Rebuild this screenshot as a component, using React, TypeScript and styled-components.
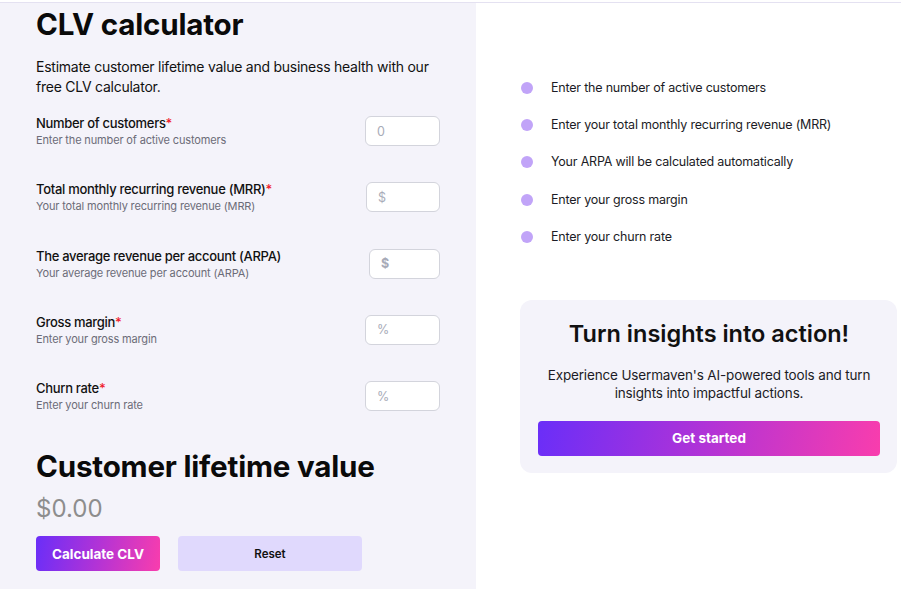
import styled, { createGlobalStyle } from "styled-components";

const GlobalStyle = createGlobalStyle`
  html, body {
    margin: 0;
    padding: 0;
    background: #ffffff;
  }
  body {
    font-family: Inter, "Noto Sans", sans-serif;
    color: #0a0a0a;
    -webkit-font-smoothing: antialiased;
  }
  * {
    box-sizing: border-box;
  }
`;

const brandGradient = "linear-gradient(100deg, #6a2ef8 0%, #b233d6 50%, #f93dad 100%)";

const Page = styled.div`
  margin-top: 2px;
  border-top: 1px solid #e4e1f1;
  display: grid;
  grid-template-columns: 476px 1fr;
  min-height: 586px;
`;

const CalculatorPanel = styled.section`
  background: #f4f3fa;
  padding: 3px 36px 20px 36px;
`;

const Title = styled.h1`
  margin: 0;
  font-size: 29.6px;
  line-height: 36px;
  font-weight: 700;
  letter-spacing: -0.2px;
`;

const Intro = styled.p`
  margin: 15px 0 17px;
  font-size: 14px;
  line-height: 20px;
  letter-spacing: -0.25px;
  color: #111;
`;

const FieldRow = styled.div`
  display: flex;
  align-items: center;
  justify-content: space-between;
  margin-bottom: 32.3px;
`;

const FieldText = styled.div`
  display: flex;
  flex-direction: column;
`;

const FieldLabel = styled.label`
  font-size: 13px;
  line-height: 18px;
  font-weight: 500;
  letter-spacing: -0.3px;
  color: #111;
`;

const Required = styled.span`
  color: #ef1c2c;
`;

const FieldHint = styled.span`
  font-size: 11px;
  line-height: 16px;
  letter-spacing: -0.15px;
  color: #6c6c78;
`;

const NumberInput = styled.input<{ $width: number; $strong?: boolean }>`
  width: ${(p) => p.$width}px;
  height: 30px;
  border: 1px solid #d3d4dc;
  border-radius: 6px;
  background: #fff;
  padding: 0 11px;
  font-family: Inter, "Noto Sans", sans-serif;
  font-size: 12.5px;
  color: #333;
  outline: none;

  &::placeholder {
    color: #a8abb8;
    font-weight: ${(p) => (p.$strong ? 700 : 400)};
  }
`;

const ResultHeading = styled.h2`
  margin: 0;
  padding-top: 3px;
  font-size: 29.6px;
  line-height: 36px;
  font-weight: 700;
  letter-spacing: -0.2px;
`;

const ResultValue = styled.div`
  margin-top: 10px;
  font-size: 24px;
  line-height: 30px;
  color: #8d8d8d;
`;

const ButtonRow = styled.div`
  display: flex;
  gap: 18px;
  margin-top: 12px;
`;

const PrimaryButton = styled.button<{ $width?: number }>`
  width: ${(p) => (p.$width ? `${p.$width}px` : "100%")};
  height: 35px;
  border: none;
  border-radius: 4px;
  background: ${brandGradient};
  color: #fff;
  font-family: Inter, "Noto Sans", sans-serif;
  font-size: 13.5px;
  font-weight: 700;
  cursor: pointer;
`;

const SecondaryButton = styled.button`
  width: 184px;
  height: 35px;
  border: none;
  border-radius: 4px;
  background: #e0d9fd;
  color: #111;
  font-family: Inter, "Noto Sans", sans-serif;
  font-size: 11.5px;
  font-weight: 600;
  cursor: pointer;
`;

const GuidePanel = styled.aside`
  padding: 76px 4px 0 44px;
`;

const StepList = styled.ul`
  list-style: none;
  margin: 0;
  padding: 0;
  display: flex;
  flex-direction: column;
  gap: 19.2px;
`;

const Step = styled.li`
  display: flex;
  align-items: center;
  gap: 18px;
  font-size: 12.5px;
  line-height: 18px;
  letter-spacing: -0.2px;
  color: #1c1c26;
`;

const Dot = styled.span`
  width: 12px;
  height: 12px;
  margin-left: 1px;
  border-radius: 50%;
  background: #c1a4f8;
  flex-shrink: 0;
`;

const PromoCard = styled.div`
  margin-top: 54px;
  background: #f4f3fa;
  border-radius: 12px;
  padding: 19px 17px 17px 18px;
  text-align: center;
`;

const PromoTitle = styled.h3`
  margin: 0;
  font-size: 23.5px;
  line-height: 30px;
  font-weight: 600;
  color: #111;
`;

const PromoText = styled.p`
  margin: 17px 0 19px;
  font-size: 13.5px;
  line-height: 18px;
  letter-spacing: -0.15px;
  color: #1c1c26;
`;

type Field = {
  label: string;
  hint: string;
  placeholder: string;
  required: boolean;
  width: number;
  strong?: boolean;
};

const fields: Field[] = [
  { label: "Number of customers", hint: "Enter the number of active customers", placeholder: "0", required: true, width: 75 },
  { label: "Total monthly recurring revenue (MRR)", hint: "Your total monthly recurring revenue (MRR)", placeholder: "$", required: true, width: 74 },
  { label: "The average revenue per account (ARPA)", hint: "Your average revenue per account (ARPA)", placeholder: "$", required: false, width: 71, strong: true },
  { label: "Gross margin", hint: "Enter your gross margin", placeholder: "%", required: true, width: 75 },
  { label: "Churn rate", hint: "Enter your churn rate", placeholder: "%", required: true, width: 75 },
];

const steps = [
  "Enter the number of active customers",
  "Enter your total monthly recurring revenue (MRR)",
  "Your ARPA will be calculated automatically",
  "Enter your gross margin",
  "Enter your churn rate",
];

export default function App() {
  return (
    <>
      <GlobalStyle />
      <Page>
        <CalculatorPanel>
          <Title>CLV calculator</Title>
          <Intro>
            Estimate customer lifetime value and business health with our free CLV calculator.
          </Intro>

          {fields.map((f) => (
            <FieldRow key={f.label}>
              <FieldText>
                <FieldLabel>
                  {f.label}
                  {f.required && <Required>*</Required>}
                </FieldLabel>
                <FieldHint>{f.hint}</FieldHint>
              </FieldText>
              <NumberInput
                $width={f.width}
                $strong={f.strong}
                placeholder={f.placeholder}
                readOnly={f.strong}
              />
            </FieldRow>
          ))}

          <ResultHeading>Customer lifetime value</ResultHeading>
          <ResultValue>$0.00</ResultValue>
          <ButtonRow>
            <PrimaryButton $width={124}>Calculate CLV</PrimaryButton>
            <SecondaryButton>Reset</SecondaryButton>
          </ButtonRow>
        </CalculatorPanel>

        <GuidePanel>
          <StepList>
            {steps.map((s) => (
              <Step key={s}>
                <Dot />
                {s}
              </Step>
            ))}
          </StepList>

          <PromoCard>
            <PromoTitle>Turn insights into action!</PromoTitle>
            <PromoText>
              Experience Usermaven's AI-powered tools and turn insights into impactful actions.
            </PromoText>
            <PrimaryButton>Get started</PrimaryButton>
          </PromoCard>
        </GuidePanel>
      </Page>
    </>
  );
}
